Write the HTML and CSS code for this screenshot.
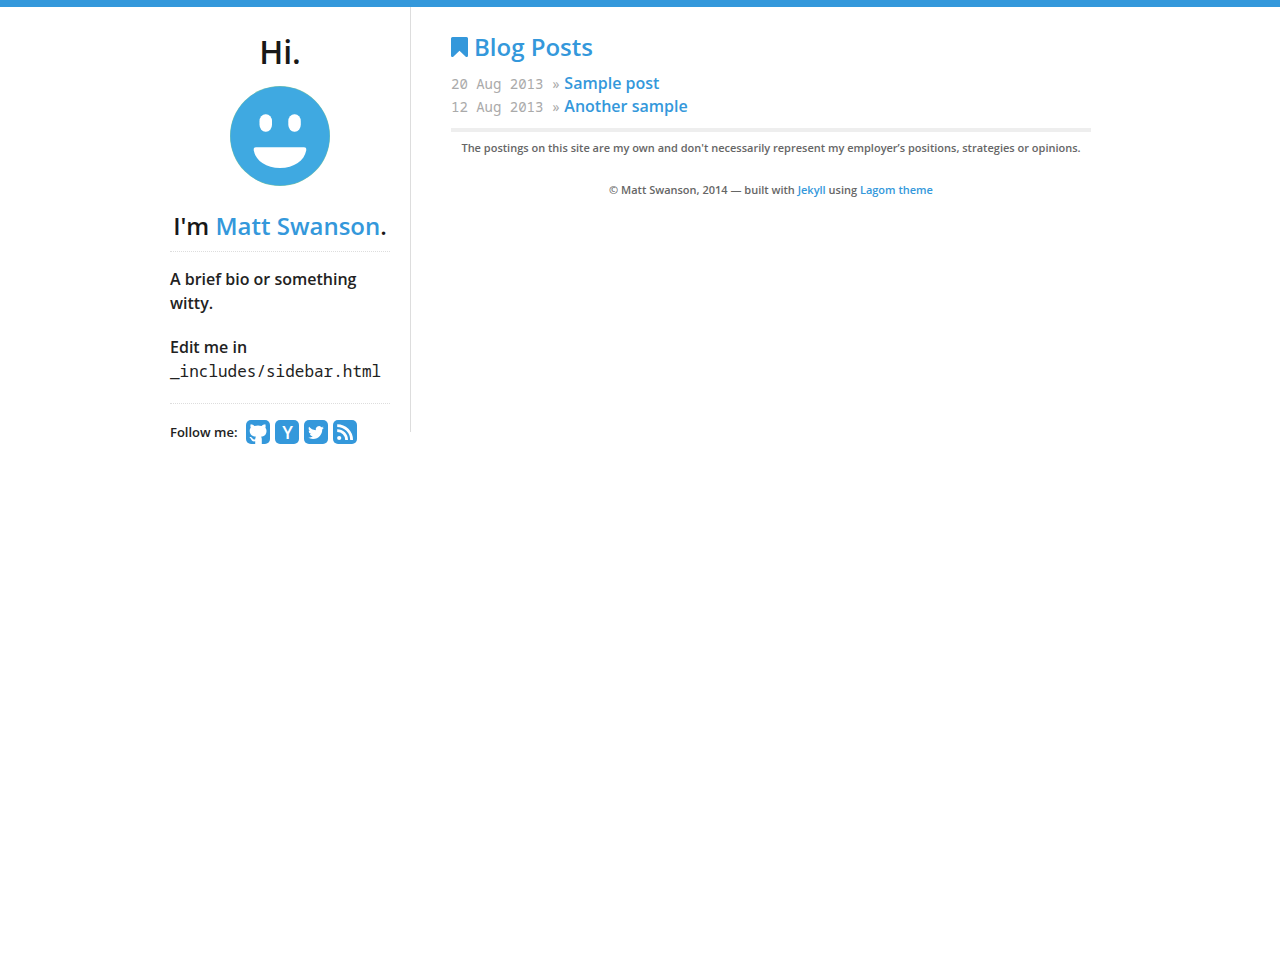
FILE: index.html
```html
<!DOCTYPE html>
<html lang="en">
<head>
    <meta charset="UTF-8">
    <meta name="viewport" content="width=device-width, initial-scale=1.0">
    <title>Blog Posts</title>
    <link rel="stylesheet" href="styles.css">
</head>
<body>
    <div class="container">
        <aside class="sidebar">
            <h1>Hi.</h1>
            <svg class="avatar" viewBox="0 0 100 100" role="img" aria-label="Smiley face">
                <circle cx="50" cy="50" r="50" fill="#7fc6a4"/>
                <circle cx="50" cy="50" r="49.6" fill="#3fa9e1"/>
                <rect x="29.5" y="28.3" width="12.5" height="17.5" rx="6" ry="7" fill="#fff"/>
                <rect x="58.3" y="28.3" width="12.5" height="17.5" rx="6" ry="7" fill="#fff"/>
                <path d="M26 61.300H74C76 61.300 76.500 62.500 76.200 64.500C74.500 74.500 64 82 50 82S25.500 74.500 23.800 64.500C23.500 62.500 24 61.300 26 61.300Z" fill="#fff"/>
            </svg>
            <h2 class="name">I'm <a href="#">Matt Swanson</a>.</h2>
            <div class="bio">
                <p>A brief bio or something witty.</p>
                <p>Edit me in <code>_includes/sidebar.html</code></p>
            </div>
            <div class="follow">
                <span>Follow me:</span>
                <ul>
                    <li><a href="#" aria-label="GitHub"><svg viewBox="0 0 24 24"><path d="M4.700 4.200C6.200 4.300 7.500 5.100 8.400 5.900Q12 5.200 15.600 5.900C16.500 5.100 17.900 4.300 19.300 4.200C19.800 5.600 19.700 6.800 19.400 7.700C20.300 8.700 20.600 9.800 20.500 11.200C20.300 14.800 18.300 16.200 15 16.700C15.600 17.300 15.800 18.200 15.800 19.500V24H9.200V21.300C6.500 21.700 5.700 20.500 5.100 19.200C4.600 18.200 4 17.700 3.400 17.200C4.800 16.800 5.800 17.500 6.500 18.500C7.200 19.500 8 19.700 9.200 19.300C9.200 18.100 9.500 17.300 10 16.700C6.400 16.300 4 14.900 3.700 11.200C3.600 9.800 3.900 8.600 4.700 7.700C4.300 6.600 4.300 5.500 4.700 4.200Z"/></svg></a></li>
                    <li><a href="#" aria-label="Hacker News">Y</a></li>
                    <li><a href="#" aria-label="Twitter"><svg viewBox="0 0 24 24"><path transform="translate(4 4.700) scale(.66)" d="M23.953 4.570a10 10 0 01-2.825.775 4.958 4.958 0 002.163-2.723c-.951.555-2.005.959-3.127 1.184a4.920 4.920 0 00-8.384 4.482C7.690 8.095 4.067 6.130 1.640 3.162a4.822 4.822 0 00-.666 2.475c0 1.710.870 3.213 2.188 4.096a4.904 4.904 0 01-2.228-.616v.060a4.923 4.923 0 003.946 4.827 4.996 4.996 0 01-2.212.085 4.936 4.936 0 004.604 3.417 9.867 9.867 0 01-6.102 2.105c-.390 0-.779-.023-1.170-.067a13.995 13.995 0 007.557 2.209c9.053 0 13.998-7.496 13.998-13.985 0-.210 0-.420-.015-.630A9.935 9.935 0 0024 4.590z"/></svg></a></li>
                    <li><a href="#" aria-label="RSS"><svg viewBox="0 0 24 24"><circle cx="6.200" cy="18" r="2.100"/><path d="M4.200 9.200V12A8 8 0 0 1 12.200 20H15A10.800 10.800 0 0 0 4.200 9.200ZM4.200 4.200V7A13 13 0 0 1 17.200 20H20A15.800 15.800 0 0 0 4.200 4.200Z"/></svg></a></li>
                </ul>
            </div>
        </aside>
        <main class="content">
            <h2 class="posts-title">
                <svg viewBox="0 0 17 20" aria-hidden="true"><path d="M1.500 0H15.500Q17 0 17 1.500V18.500Q17 20 15.700 20Q15 20 14.500 19.500L8.500 13.800L2.500 19.500Q2 20 1.300 20Q0 20 0 18.500V1.500Q0 0 1.500 0Z"/></svg>
                <a href="#">Blog Posts</a>
            </h2>
            <ul class="posts">
                <li><span class="date">20 Aug 2013 »</span> <a href="#">Sample post</a></li>
                <li><span class="date">12 Aug 2013 »</span> <a href="#">Another sample</a></li>
            </ul>
            <footer class="footer">
                <p>The postings on this site are my own and don't necessarily represent my employer’s positions, strategies or opinions.</p>
                <p>© Matt Swanson, 2014 — built with <a href="#">Jekyll</a> using <a href="#">Lagom theme</a></p>
            </footer>
        </main>
    </div>
</body>
</html>
```
FILE: styles.css
```css
* {
    box-sizing: border-box;
}
body {
    min-height: 100vh;
    margin: 0;
    border-top: 7px solid #3498db;
    background: #fff;
    color: #222;
    font-family: "Open Sans", sans-serif;
    font-size: 16px;
    font-weight: 600;
    line-height: 24px;
}
h1, h2, p, ul {
    margin: 0;
    padding: 0;
}
h1, h2 {
    color: #181818;
    font-weight: 600;
}
ul {
    list-style: none;
}
a {
    color: #3498db;
    text-decoration: none;
}

/* layout */
.container {
    display: flex;
    align-items: flex-start;
    gap: 40px;
    max-width: 960px;
    margin: 0 auto;
    padding: 0 29px 0 10px;
}
.sidebar {
    flex: 0 0 241px;
    padding: 25px 20px 0 0;
    border-right: 1px solid #ddd;
}
.content {
    flex: 1;
    padding-top: 23px;
}

/* sidebar */
.sidebar h1 {
    font-size: 32px;
    line-height: 40px;
    text-align: center;
}
.avatar {
    display: block;
    width: 100px;
    height: 100px;
    margin: 14px auto 23px;
}
.name {
    font-size: 24px;
    line-height: 34px;
    text-align: center;
    white-space: nowrap;
}
.bio {
    margin-top: 8px;
    padding-top: 15px;
    border-top: 1px dotted #ddd;
    border-bottom: 1px dotted #ddd;
}
.bio p {
    margin-bottom: 20px;
}
code, .date {
    font-family: "Noto Sans Mono", "Liberation Mono", monospace;
    font-weight: 400;
    line-height: 16px;
}
code {
    font-size: 16px;
}
/* icons hang below the end of the divider */
.follow {
    display: flex;
    align-items: center;
    gap: 9px;
    margin: 16px 0 -12px;
    font-size: 13px;
}
.follow ul {
    display: flex;
    gap: 5px;
}
.follow a {
    display: block;
    width: 24px;
    height: 24px;
    border-radius: 5px;
    background: #3498db;
    color: #fff;
    font-size: 18px;
    text-align: center;
}
.follow svg {
    display: block;
    fill: #fff;
}

/* posts */
.posts-title {
    display: flex;
    align-items: center;
    gap: 6px;
    font-size: 24px;
    line-height: 34px;
}
.posts-title svg {
    width: 17px;
    height: 20px;
    fill: #3498db;
}
.posts {
    padding: 8px 0 10px;
    line-height: 23px;
}
.date {
    color: #aaa;
    font-size: 14px;
}

.footer {
    padding-top: 5px;
    border-top: 4px solid #eee;
    color: #666;
    font-size: 11px;
    line-height: 22px;
    text-align: center;
}
.footer p {
    margin-bottom: 20px;
}
```
